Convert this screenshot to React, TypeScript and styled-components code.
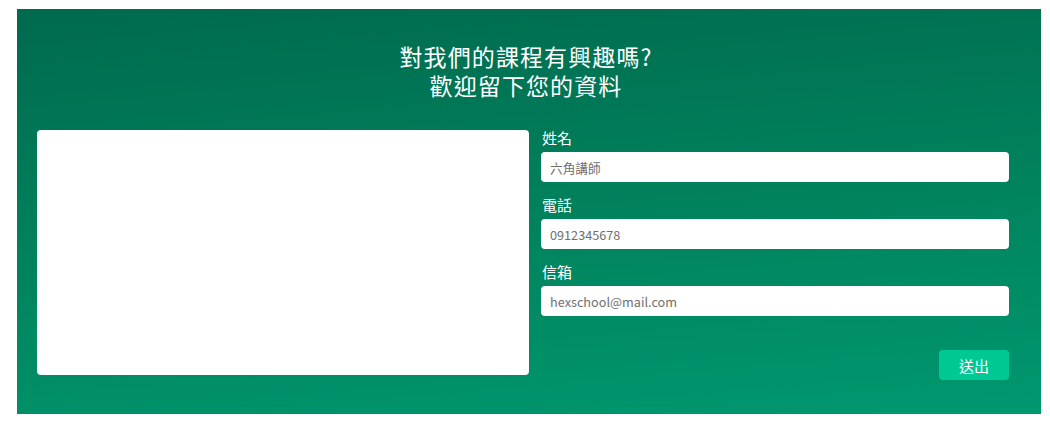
import React from "react";
import styled, { createGlobalStyle } from "styled-components";

const GlobalStyle = createGlobalStyle`
  html, body { margin: 0; padding: 0; background: #ffffff; }
  body {
    padding: 9px 9px 8px 17px;
    font-family: "Noto Sans CJK TC", "Noto Sans", sans-serif;
  }
  * { box-sizing: border-box; }
`;

const Section = styled.section`
  background: linear-gradient(175deg, #006a4e 0%, #00845e 55%, #00986f 100%);
  padding: 33px 32px 34px 20px;
  color: #ffffff;
`;

const Title = styled.h2`
  margin: 0 0 30px;
  text-align: center;
  font-size: 23px;
  font-weight: 400;
  letter-spacing: 1.1px;
`;

const TitleLine = styled.span`
  display: block;
  line-height: 29px;
  padding-left: 6px;
`;

const Row = styled.div`
  display: grid;
  grid-template-columns: 492px 1fr;
  column-gap: 12px;
  align-items: start;
`;

const Placeholder = styled.div`
  background: #ffffff;
  border-radius: 4px;
  height: 245px;
`;

const Form = styled.form`
  display: flex;
  flex-direction: column;
`;

const Field = styled.div`
  display: flex;
  flex-direction: column;
  margin-bottom: 15px;
`;

const Label = styled.label`
  font-size: 15px;
  line-height: 16px;
  margin: 0 0 6px 1px;
  color: #ffffff;
`;

const Input = styled.input`
  height: 30px;
  border: none;
  border-radius: 4px;
  background: #ffffff;
  padding: 0 9px;
  font-family: "Noto Sans CJK TC", "Noto Sans", sans-serif;
  font-size: 12.7px;
  color: #333;
  outline: none;
  &::placeholder { color: #6f6f6f; }
`;

const Actions = styled.div`
  display: flex;
  justify-content: flex-end;
  margin-top: 19px;
`;

const Submit = styled.button`
  width: 70px;
  height: 30px;
  border: none;
  border-radius: 4px;
  background: #00c893;
  color: #ffffff;
  font-family: "Noto Sans CJK TC", "Noto Sans", sans-serif;
  font-size: 15px;
  cursor: pointer;
`;

const fields = [
  { label: "姓名", placeholder: "六角講師", type: "text" },
  { label: "電話", placeholder: "0912345678", type: "tel" },
  { label: "信箱", placeholder: "hexschool@mail.com", type: "email" },
];

export default function App() {
  return (
    <>
      <GlobalStyle />
      <Section>
        <Title>
          <TitleLine>對我們的課程有興趣嗎?</TitleLine>
          <TitleLine>歡迎留下您的資料</TitleLine>
        </Title>
        <Row>
          <Placeholder />
          <Form onSubmit={(e) => e.preventDefault()}>
            {fields.map((f) => (
              <Field key={f.label}>
                <Label>{f.label}</Label>
                <Input type={f.type} placeholder={f.placeholder} />
              </Field>
            ))}
            <Actions>
              <Submit type="submit">送出</Submit>
            </Actions>
          </Form>
        </Row>
      </Section>
    </>
  );
}
